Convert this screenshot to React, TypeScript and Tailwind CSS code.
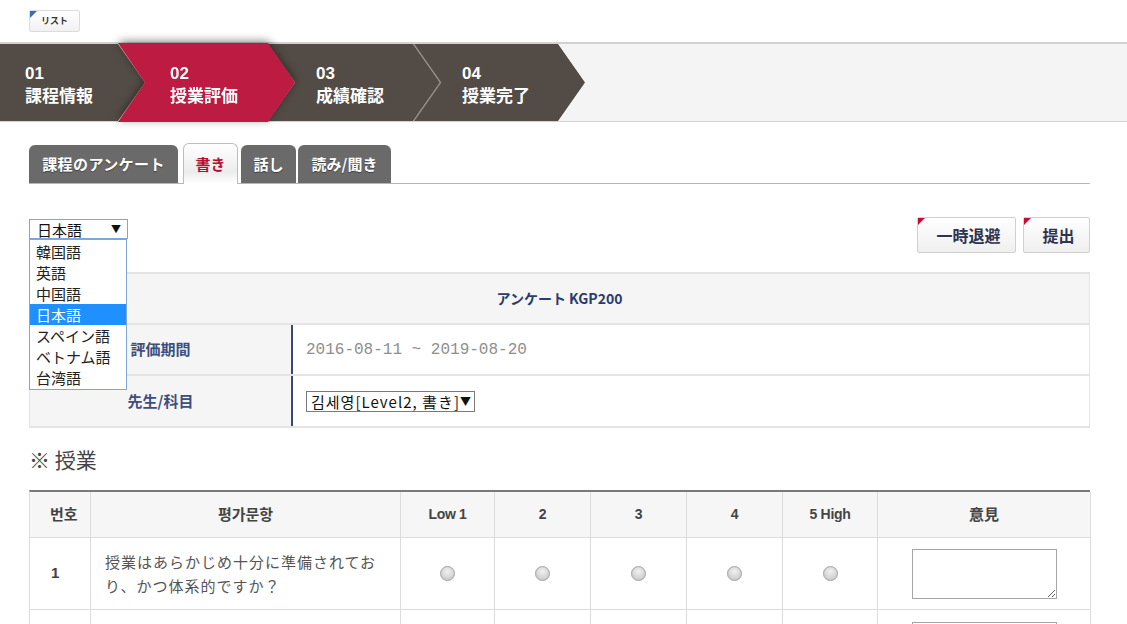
const steps = [
  { no: "01", label: "課程情報" },
  { no: "02", label: "授業評価" },
  { no: "03", label: "成績確認" },
  { no: "04", label: "授業完了" },
];

const languages = ["韓国語", "英語", "中国語", "日本語", "スペイン語", "ベトナム語", "台湾語"];

const scoreCols = ["Low 1", "2", "3", "4", "5 High"];

function Corner({ color }: { color: string }) {
  return (
    <span
      className={`absolute left-0 top-0 h-[7px] w-[7px] [clip-path:polygon(0_0,100%_0,0_100%)] ${color}`}
    />
  );
}

function StepText({ no, label, pad }: { no: string; label: string; pad: string }) {
  return (
    <div className={`flex h-full flex-col justify-center pt-[4px] text-white ${pad}`}>
      <span className="font-['Liberation_Sans',sans-serif] text-[17px] font-bold leading-[21px]">{no}</span>
      <span className="text-[17px] font-bold leading-[22px]">{label}</span>
    </div>
  );
}

function StepBar() {
  return (
    <div className="mt-[10px] flex h-[80px] border-t-2 border-b border-[#d2d2d2] bg-[#f4f4f4]">
      <div className="h-full w-[145px] shrink-0 bg-[#534c46] [clip-path:polygon(0_0,calc(100%_-_27px)_0,100%_50%,calc(100%_-_27px)_100%,0_100%)]">
        <StepText no={steps[0].no} label={steps[0].label} pad="pl-[25px]" />
      </div>
      <div className="relative z-10 -ml-[27px] -mt-[1px] h-[79px] w-[177px] shrink-0 [filter:drop-shadow(0_-2px_4px_rgba(0,0,0,0.45))]">
        <div className="h-full w-full bg-[#bd1b41] [clip-path:polygon(0_0,calc(100%_-_27px)_0,100%_50%,calc(100%_-_27px)_100%,0_100%,27px_50%)]">
          <StepText no={steps[1].no} label={steps[1].label} pad="pl-[52px]" />
        </div>
      </div>
      <div className="-ml-[27px] h-full w-[172px] shrink-0 bg-[#534c46] [clip-path:polygon(0_0,calc(100%_-_27px)_0,100%_50%,calc(100%_-_27px)_100%,0_100%,27px_50%)]">
        <StepText no={steps[2].no} label={steps[2].label} pad="pl-[48px]" />
      </div>
      <div className="-ml-[27px] h-full w-[172px] shrink-0 bg-[#8a847e] [clip-path:polygon(0_0,calc(100%_-_27px)_0,100%_50%,calc(100%_-_27px)_100%,0_100%,27px_50%)]">
        <div className="h-full w-full bg-[#534c46] [clip-path:polygon(1.5px_0,calc(100%_-_27px)_0,100%_50%,calc(100%_-_27px)_100%,1.5px_100%,28.5px_50%)]">
          <StepText no={steps[3].no} label={steps[3].label} pad="pl-[49px]" />
        </div>
      </div>
    </div>
  );
}

function Tabs() {
  const dark =
    "flex h-[38px] items-center justify-center rounded-t-[6px] bg-[#6a6a6a] text-[15px] font-bold text-white [text-shadow:0_1px_1px_rgba(0,0,0,0.4)]";
  return (
    <div className="mt-[21px] flex items-end border-b border-[#b5b5b5]">
      <div className={`${dark} w-[149px] tracking-[0.4px]`}>課程のアンケート</div>
      <div className="relative -mb-px ml-[5px] flex h-[41px] w-[55px] items-center justify-center rounded-t-[6px] border border-b-0 border-[#bdbdbd] bg-[linear-gradient(#ffffff,#ececec_70%,#ffffff)] text-[15px] font-bold text-[#b3122f]">
        書き
      </div>
      <div className={`${dark} ml-[3px] w-[55px]`}>話し</div>
      <div className={`${dark} ml-[2px] w-[93px]`}>読み/聞き</div>
    </div>
  );
}

function LanguageSelect() {
  return (
    <div className="relative mt-[2px] w-[99px]">
      <div className="flex h-[20px] items-center justify-between border border-[#7ea6d8] bg-white pl-[7px] pr-[6px] text-[15px] leading-none text-[#111]">
        <span>日本語</span>
        <span className="text-[10px]">▼</span>
      </div>
      <ul className="absolute left-0 top-full z-20 w-[98px] border border-[#7ea6d8] bg-white py-[1px] text-[15px] text-[#222]">
        {languages.map((l) => (
          <li
            key={l}
            className={`h-[21px] pl-[6px] leading-[21px] ${l === "日本語" ? "bg-[#1e90ff] text-white" : ""}`}
          >
            {l}
          </li>
        ))}
      </ul>
    </div>
  );
}

function ActionButton({ label, w }: { label: string; w: string }) {
  return (
    <button
      className={`relative flex h-[36px] items-center justify-center rounded-[2px] border border-[#d0d0d0] bg-[linear-gradient(#ffffff,#efefef)] pl-[4px] text-[16px] font-bold text-[#2d3350] ${w}`}
    >
      <Corner color="bg-[#c0102e]" />
      {label}
    </button>
  );
}

function InfoTable() {
  return (
    <div className="mt-[19px] border-x border-b-2 border-[#e4e4e4] text-[15px]">
      <div className="flex h-[51px] items-center justify-center border-t-2 border-[#e4e4e4] bg-[#f5f5f5] text-[14px] font-bold text-[#2b3b6c]">
        アンケート KGP200
      </div>
      <div className="grid h-[51px] grid-cols-[261px_1fr] border-t-2 border-[#e4e4e4]">
        <div className="flex items-center justify-center bg-[#f5f5f5] font-bold text-[#3d4e80]">評価期間</div>
        <div className="flex items-center border-l-2 border-[#3c4676] pl-[13px] font-['Liberation_Mono',monospace] text-[16px] text-[#8e8e8e]">
          2016-08-11 ~ 2019-08-20
        </div>
      </div>
      <div className="grid h-[52px] grid-cols-[261px_1fr] border-t-2 border-[#e4e4e4]">
        <div className="flex items-center justify-center bg-[#f5f5f5] font-bold text-[#3d4e80]">先生/科目</div>
        <div className="flex items-center border-l-2 border-[#3c4676] pl-[13px]">
          <div className="flex h-[21px] items-center border border-[#7a7a7a] pl-[4px] pr-[2px] text-[15px] leading-none tracking-[1px] text-[#111]">
            <span className="font-['Noto_Sans_CJK_KR',sans-serif]">김세영</span>
            <span>[Level2, 書き]</span>
            <span className="text-[11px]">▼</span>
          </div>
        </div>
      </div>
    </div>
  );
}

function Radio() {
  return (
    <span className="block h-[15px] w-[15px] rounded-full border border-[#a0a0a0] bg-[radial-gradient(circle_at_50%_35%,#f0f0f0,#c2c2c2)]" />
  );
}

function EvalTable() {
  const head = "flex items-center justify-center border-r border-b border-[#dcdcdc] bg-[#f6f6f6] font-bold text-[#444]";
  const cell = "flex items-center justify-center border-r border-b border-[#dcdcdc]";
  return (
    <div className="grid grid-cols-[61px_310px_94px_96px_96px_96px_95px_213px] border-t-2 border-l border-[#7a7a7a] border-l-[#dcdcdc]">
      <div className={`${head} h-[46px] justify-start pl-[20px] text-[15px]`}>
        <span className="font-['Noto_Sans_CJK_KR',sans-serif]">번호</span>
      </div>
      <div className={`${head} font-['Noto_Sans_CJK_KR',sans-serif] text-[15px]`}>평가문항</div>
      {scoreCols.map((s) => (
        <div key={s} className={`${head} font-['Liberation_Sans',sans-serif] text-[14px] tracking-[-0.3px]`}>
          {s}
        </div>
      ))}
      <div className={`${head} text-[15px]`}>意見</div>

      <div className={`${cell} h-[72px] justify-start pl-[21px] font-['Liberation_Sans',sans-serif] text-[15px] font-bold text-[#444]`}>
        1
      </div>
      <div className={`${cell} justify-start pl-[14px] text-[15px] leading-[24px] tracking-[1px] text-[#555]`}>
        <p>
          授業はあらかじめ十分に準備されてお
          <br />
          り、かつ体系的ですか？
        </p>
      </div>
      {scoreCols.map((s) => (
        <div key={s} className={cell}>
          <Radio />
        </div>
      ))}
      <div className={cell}>
        <textarea readOnly className="h-[50px] w-[145px] border border-[#a5a5a5] bg-white" />
      </div>

      <div className={`${cell} h-[72px]`} />
      <div className={cell} />
      {scoreCols.map((s) => (
        <div key={s} className={cell} />
      ))}
      <div className={`${cell} items-start pt-[12px]`}>
        <textarea readOnly className="h-[50px] w-[145px] border border-[#a5a5a5] bg-white" />
      </div>
    </div>
  );
}

export default function App() {
  return (
    <div className="h-[624px] overflow-hidden bg-white font-['Noto_Sans_CJK_JP',sans-serif] text-[#333]">
      <div className="pl-[29px] pt-[10px]">
        <button className="relative flex h-[22px] w-[51px] items-center justify-center rounded-[2px] border border-[#dcdcdc] bg-[linear-gradient(#ffffff,#f1f1f1)] text-[9px] font-bold text-[#333]">
          <Corner color="bg-[#3b6fb5]" />
          リスト
        </button>
      </div>
      <StepBar />
      <div className="pl-[29px] pr-[37px]">
        <Tabs />
        <div className="mt-[33px] flex items-start justify-between">
          <LanguageSelect />
          <div className="flex gap-[7px]">
            <ActionButton label="一時退避" w="w-[99px]" />
            <ActionButton label="提出" w="w-[67px]" />
          </div>
        </div>
        <InfoTable />
        <h2 className="mt-[16px] mb-[16px] h-[30px] text-[21px] leading-[30px] text-[#444]">※ 授業</h2>
        <EvalTable />
      </div>
    </div>
  );
}
